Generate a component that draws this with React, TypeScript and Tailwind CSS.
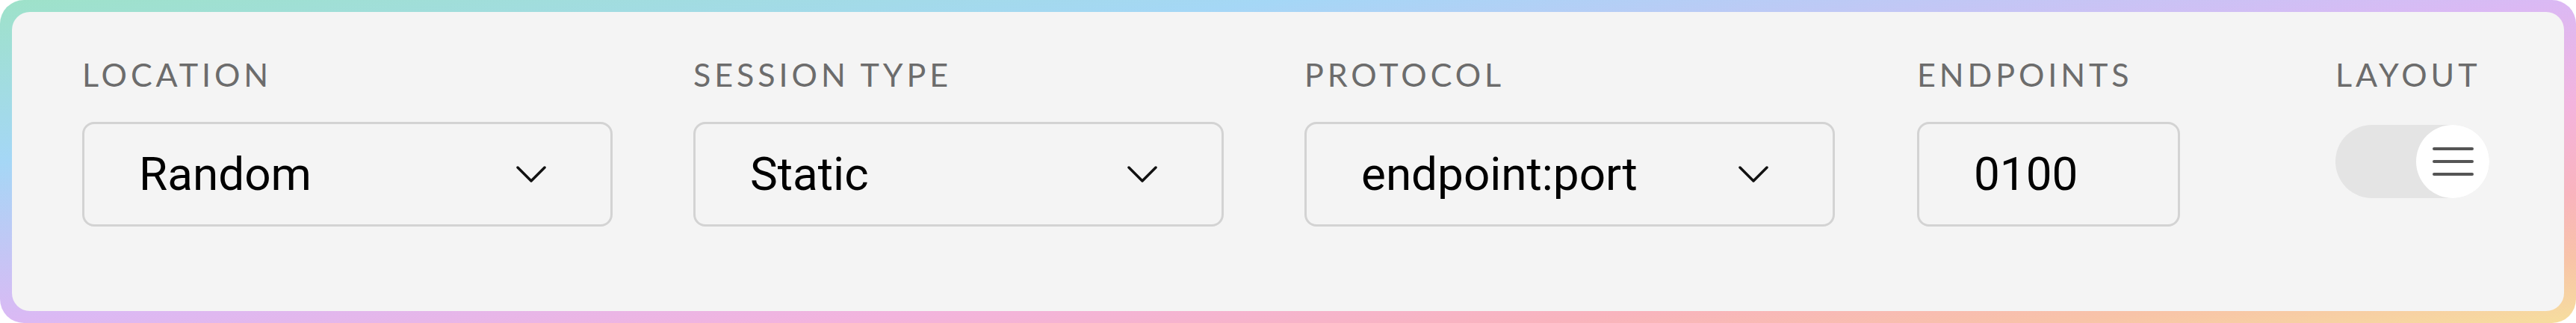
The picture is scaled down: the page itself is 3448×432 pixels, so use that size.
import { ReactNode } from "react"

const labelCls =
  "block text-[43px] leading-none tracking-[0.115em] text-[#6c6c6c] font-['Lato','Liberation_Sans',sans-serif]"

function Chevron() {
  return (
    <svg width="40" height="22" viewBox="0 0 40 22" fill="none" className="shrink-0">
      <polyline points="2,2 20,20 38,2" stroke="#111" strokeWidth="3.5" strokeLinecap="round" strokeLinejoin="round" />
    </svg>
  )
}

function Field({ label, width, children }: { label: string; width: string; children: ReactNode }) {
  return (
    <div className={width}>
      <span className={labelCls}>{label}</span>
      <div className="mt-[42px]">{children}</div>
    </div>
  )
}

function Select({ value }: { value: string }) {
  return (
    <div className="flex h-[140px] items-center justify-between rounded-[16px] border-[3px] border-[#d3d3d3] pl-[73px] pr-[86px]">
      <span className="text-[62px] leading-none text-black font-['Roboto','Liberation_Sans',sans-serif]">{value}</span>
      <Chevron />
    </div>
  )
}

export default function App() {
  return (
    <div className="h-[432px] w-[3448px] rounded-[32px] bg-[linear-gradient(to_bottom_right,#9ee2c9_0%,#a5d7f6_25%,#dbb9f4_50%,#f3b3dd_66%,#f9b3bd_80%,#f8c3a8_90%,#f6de9e_100%)] p-4">
      <div className="flex h-full items-start rounded-[24px] bg-[#f4f4f4] pl-[94px] pt-[62px]">
        <Field label="LOCATION" width="w-[710px]">
          <Select value="Random" />
        </Field>
        <Field label="SESSION TYPE" width="ml-[108px] w-[710px]">
          <Select value="Static" />
        </Field>
        <Field label="PROTOCOL" width="ml-[108px] w-[710px]">
          <Select value="endpoint:port" />
        </Field>
        <Field label="ENDPOINTS" width="ml-[110px] w-[352px]">
          <div className="flex h-[140px] items-center rounded-[16px] border-[3px] border-[#d3d3d3] pl-[73px]">
            <span className="text-[62px] leading-none text-black font-['Roboto','Liberation_Sans',sans-serif]">0100</span>
          </div>
        </Field>
        <div className="ml-[208px]">
          <span className={labelCls}>LAYOUT</span>
          <div className="mt-[46px] flex h-[98px] w-[206px] justify-end rounded-full bg-[#e4e4e4]">
            <div className="flex h-[98px] w-[98px] flex-col items-center justify-center gap-[13px] rounded-full bg-white">
              <span className="block h-[4px] w-[55px] rounded-full bg-[#555]" />
              <span className="block h-[4px] w-[55px] rounded-full bg-[#555]" />
              <span className="block h-[4px] w-[55px] rounded-full bg-[#555]" />
            </div>
          </div>
        </div>
      </div>
    </div>
  )
}
